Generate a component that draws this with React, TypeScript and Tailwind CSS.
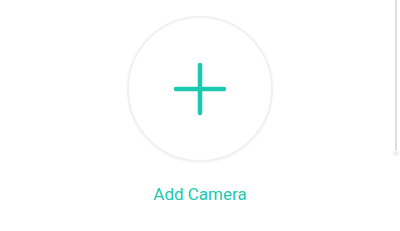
export default function App() {
  return (
    <div className="relative w-[400px] h-[231px] bg-white overflow-hidden font-['Roboto',sans-serif]">
      <div className="flex flex-col items-center pt-4">
        <button className="h-[146px] w-[146px] rounded-full border-2 border-[#f0f0f0] bg-white flex items-center justify-center shadow-[0_1px_3px_rgba(0,0,0,0.04)]">
          <svg width="56" height="56" viewBox="0 0 56 56" fill="none">
            <path
              d="M28 4v48M4 28h48"
              stroke="#1dc8b1"
              strokeWidth="4.5"
              strokeLinecap="round"
            />
          </svg>
        </button>
        <p className="mt-[22px] text-[17px] leading-5 text-[#1dc8b1]">Add Camera</p>
      </div>

      {/* scroll edge */}
      <div className="absolute right-[3px] top-0 h-[153px] w-[2px] bg-[#dedede]" />
      <div className="absolute right-[1px] top-[150px] h-[6px] w-[6px] rounded-full bg-[#f2f2f2]" />
    </div>
  );
}
